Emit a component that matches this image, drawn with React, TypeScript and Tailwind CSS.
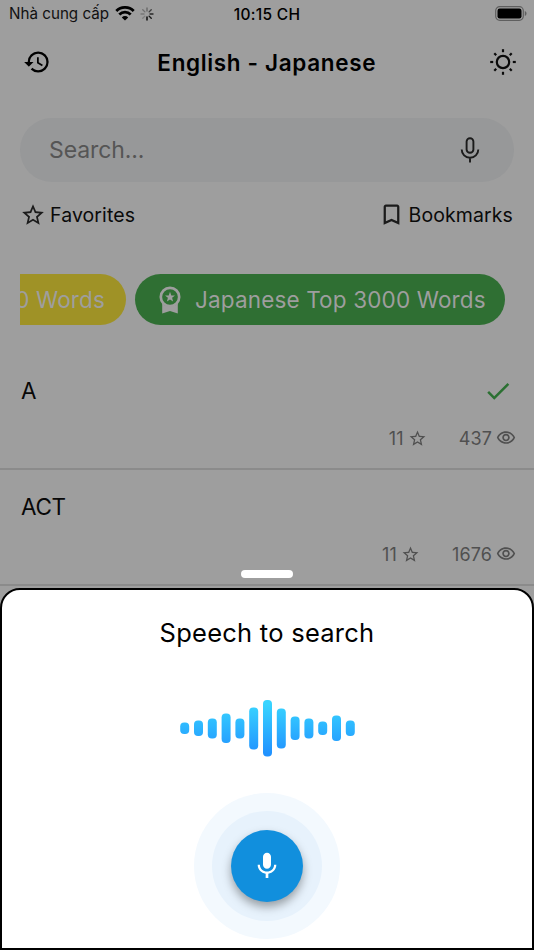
import React from 'react';
import {
    MdBookmarkBorder,
    MdCheck,
    MdHistory,
    MdMic,
    MdOutlineVisibility,
    MdStarBorder,
} from 'react-icons/md';

interface WordEntry {
    word: string;
    stars: number;
    views: number;
    learned: boolean;
}

const words: WordEntry[] = [
    { word: 'A', stars: 11, views: 437, learned: true },
    { word: 'ACT', stars: 11, views: 1676, learned: false },
];

// [top, height] of each bar in the voice wave
const waveBars = [
    [22.5, 11.5],
    [20.5, 15.5],
    [18.5, 20],
    [13.5, 29.5],
    [18.5, 20],
    [7.5, 42],
    [0, 56.5],
    [8.5, 40],
    [16.5, 23.5],
    [18.5, 20],
    [21.5, 13.5],
    [15.5, 25.5],
    [20.5, 15.5],
];

const WifiIcon = () => (
    <svg width="20" height="15" viewBox="0 0 20 15" fill="none" stroke="#000" strokeWidth="2.8">
        <path d="M1.3 5a12.3 12.3 0 0 1 17.4 0" />
        <path d="M4.3 8.4a8.1 8.1 0 0 1 11.4 0" />
        <path d="M10 14.6 6.8 11.4a4.6 4.6 0 0 1 6.4 0Z" fill="#000" stroke="none" />
    </svg>
);

const SpinnerIcon = () => (
    <svg width="14" height="14" viewBox="0 0 14 14" strokeWidth="1.4" strokeLinecap="round">
        {[0.35, 0.6, 0.75, 0.85, 1, 0.2, 0.25, 0.3].map((opacity, i) => (
            <path key={i} d="M7 1v3" stroke="#000" strokeOpacity={opacity} transform={`rotate(${i * 45} 7 7)`} />
        ))}
    </svg>
);

const BatteryIcon = () => (
    <svg width="32" height="15" viewBox="0 0 32 15">
        <rect x="0.7" y="0.7" width="27.6" height="13.6" rx="4" fill="none" stroke="#5f5f5f" strokeWidth="1.2" />
        <rect x="2.5" y="2.5" width="24" height="10" rx="2.2" fill="#000" />
        <path d="M29.8 5v5c1.2-.5 1.7-1.4 1.7-2.5s-.5-2-1.7-2.5Z" fill="#5f5f5f" />
    </svg>
);

const SunIcon = () => (
    <svg width="28" height="28" viewBox="0 0 28 28" fill="none" stroke="#0a0a0a" strokeWidth="2.2">
        <circle cx="14" cy="14" r="6.2" />
        {[0, 1, 2, 3, 4, 5, 6, 7].map(i => (
            <path key={i} d={i % 2 ? 'M14 1.7v2.7' : 'M14 1.2v3'} transform={`rotate(${i * 45} 14 14)`} />
        ))}
    </svg>
);

const MicOutlineIcon = () => (
    <svg width="20" height="26" viewBox="0 0 20 26" fill="none" stroke="#1b1b1b" strokeWidth="1.9">
        <rect x="6.6" y="1.2" width="6.8" height="14.6" rx="3.4" />
        <path d="M1.7 12.5a8.3 8.3 0 0 0 16.6 0M10 20.6v5" />
    </svg>
);

const MedalIcon = () => (
    <svg width="22" height="28" viewBox="0 0 22 28">
        <circle cx="11" cy="11" r="9.2" fill="none" stroke="#9e9e9e" strokeWidth="2.7" />
        <path d="M3.2 17.5c4.6 4.3 11 4.3 15.6 0v10L11 25l-7.8 2.5Z" fill="#9e9e9e" />
        <path
            d="m11 5.8 1.3 3.6 3.7.1-2.9 2.3 1 3.7-3.1-2.1-3.1 2.1 1-3.7L6 9.5l3.7-.1Z"
            fill="#9e9e9e"
        />
    </svg>
);

const VoiceWave = () => (
    <svg width="176" height="57" viewBox="0 0 176 57">
        <defs>
            <linearGradient id="wave" gradientUnits="userSpaceOnUse" x1="0" y1="4" x2="0" y2="54">
                <stop offset="0" stopColor="#38d4ff" />
                <stop offset="1" stopColor="#2192ff" />
            </linearGradient>
        </defs>
        {waveBars.map(([top, height], i) => (
            <rect key={i} x={0.2 + i * 13.8} y={top} width="9" height={height} rx="4" fill="url(#wave)" />
        ))}
    </svg>
);

const WordRow: React.FC<{ entry: WordEntry }> = ({ entry }) => (
    <div className="flex h-[116px] flex-col border-b-2 border-[#8b8b8b] pl-[21px] pr-[19px]">
        <div className="flex h-[74px] items-center justify-between">
            <span className="text-[22.5px] tracking-[-0.3px] text-[#080808]">{entry.word}</span>
            {entry.learned && <MdCheck className="mr-0.5 size-[30px] text-[#2b7032]" />}
        </div>
        <div className="flex h-5 items-center justify-end text-[18px] text-[#505050]">
            <span className="tracking-[0.2px]">{entry.stars}</span>
            <MdStarBorder className="ml-1 size-[19px]" />
            <span className="ml-8 tracking-[0.1px]">{entry.views}</span>
            <MdOutlineVisibility className="-mr-px ml-1 size-5" />
        </div>
    </div>
);

const App: React.FC = () => {
    return (
        <div className="flex h-[950px] w-[534px] flex-col overflow-hidden bg-[#9e9e9e] font-['Inter','Noto_Sans',sans-serif] text-black">
            <div className="relative h-[588px] shrink-0">
                <div className="grid h-7 grid-cols-3 items-center pl-[9px] pr-[9px]">
                    <div className="flex items-center whitespace-nowrap text-[15.2px] text-[#111]">
                        <span className="mt-px">Nhà cung cấp</span>
                        <span className="ml-1.5"><WifiIcon /></span>
                        <span className="ml-[5px]"><SpinnerIcon /></span>
                    </div>
                    <div className="mt-px text-center text-[15.5px] font-medium tracking-[0.3px]">10:15 CH</div>
                    <div className="-mr-0.5 -mt-0.5 flex justify-end"><BatteryIcon /></div>
                </div>

                <header className="flex h-[69px] items-center justify-between pl-[22.5px] pr-[17px]">
                    <MdHistory className="-mt-px size-7" />
                    <h1 className="-ml-1.5 text-[22.5px] font-semibold tracking-[0.65px]">English - Japanese</h1>
                    <span className="-mt-0.5"><SunIcon /></span>
                </header>

                <div className="mx-5 mt-[21px] flex h-16 items-center justify-between rounded-full bg-[#979899] pl-[29px] pr-[34px]">
                    <span className="text-[23px] tracking-[-0.1px] text-[#555]">Search...</span>
                    <MicOutlineIcon />
                </div>

                <div className="mt-[18px] flex h-[30px] items-center justify-between pl-5 pr-[21px] text-[19.5px] text-[#0a0a0a]">
                    <div className="flex items-center gap-1">
                        <MdStarBorder className="size-[26px] text-[#1b1b1b]" />
                        <span className="mt-0.5 tracking-[0.1px]">Favorites</span>
                    </div>
                    <div className="flex items-center gap-1">
                        <MdBookmarkBorder className="-mt-0.5 size-[27px] text-[#1b1b1b]" />
                        <span className="mt-0.5 tracking-[0.1px]">Bookmarks</span>
                    </div>
                </div>

                <div className="ml-5 mr-[29px] mt-11 flex h-[51px] justify-end gap-[9px] overflow-hidden whitespace-nowrap text-[22.5px] tracking-[0.15px] text-[#9e9e9e]">
                    <div className="flex shrink-0 items-center rounded-full bg-[#9f9226] px-[21px]">English Top 3000 Words</div>
                    <div className="flex w-[370px] shrink-0 items-center rounded-full bg-[#2f6f33] pl-6">
                        <MedalIcon />
                        <span className="ml-3.5">Japanese Top 3000 Words</span>
                    </div>
                </div>

                <div className="mt-[29px]">
                    {words.map(entry => <WordRow key={entry.word} entry={entry} />)}
                </div>

                {/* drag handle of the sheet */}
                <div className="absolute bottom-2.5 left-[241px] h-2 w-[52px] rounded-full bg-white" />
            </div>

            <section className="flex flex-1 flex-col items-center rounded-t-[20px] border-2 border-black bg-white">
                <h2 className="mt-6 text-[25.5px] leading-[38px] tracking-[0.25px]">Speech to search</h2>
                <div className="ml-0.5 mt-[48px]"><VoiceWave /></div>
                <button className="mt-[36px] flex size-[146px] items-center justify-center rounded-full bg-[#f3f9fe]">
                    <span className="flex size-[110px] items-center justify-center rounded-full bg-[#e7f2fc]">
                        <span className="flex size-[72px] items-center justify-center rounded-full bg-[#118fdd] shadow-[0_5px_10px_rgba(0,0,0,0.35)]">
                            <MdMic className="size-8 text-white" />
                        </span>
                    </span>
                </button>
            </section>
        </div>
    );
};

export default App;
